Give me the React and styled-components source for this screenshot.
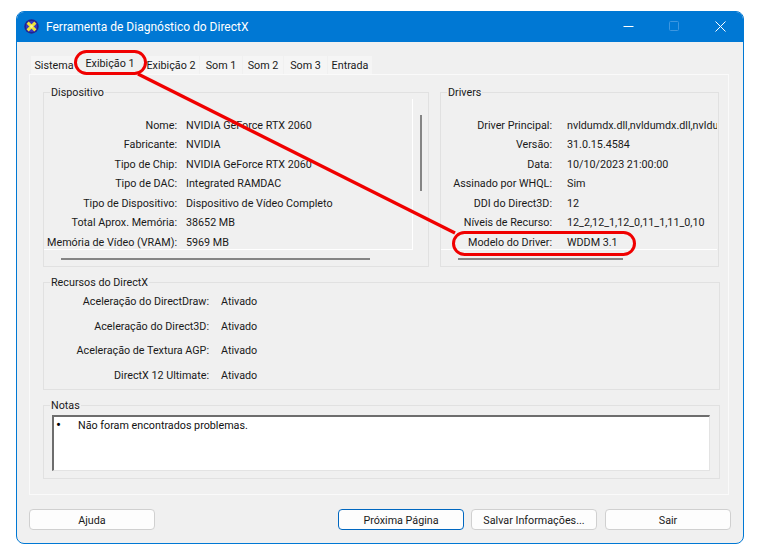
import React from 'react';
import styled, { createGlobalStyle } from 'styled-components';

const GlobalStyle = createGlobalStyle`
  html, body {
    margin: 0;
    background: #fff;
  }
  body {
    width: 757px;
    height: 557px;
    overflow: hidden;
    font-family: Roboto, "Open Sans", sans-serif;
    font-size: 10.75px;
    color: #1a1a1a;
  }
`;

const Page = styled.div`
  position: relative;
  width: 757px;
  height: 557px;
  padding: 11px 13px 13px 16px;
  box-sizing: border-box;
`;

const Window = styled.div`
  width: 728px;
  height: 533px;
  box-sizing: border-box;
  border: 1px solid #0078d4;
  border-radius: 8px;
  background: #f0f0f0;
  overflow: hidden;
  display: flex;
  flex-direction: column;
`;

const TitleBar = styled.div`
  height: 31px;
  flex: none;
  margin: -1px -1px 0;
  background: #0078d4;
  color: #fff;
  display: flex;
  align-items: center;
  padding: 0 0 0 8px;
  font-size: 12px;
`;

const TitleText = styled.span`
  margin-left: 7px;
  flex: 1;
`;

const Controls = styled.div`
  display: flex;
  align-items: center;
  gap: 35px;
  padding-right: 18px;
`;

const Body = styled.div`
  flex: 1;
  display: flex;
  flex-direction: column;
  padding: 14px 13px 0 12px;
`;

const Tabs = styled.div`
  display: flex;
  height: 18px;
  align-items: flex-end;
  padding-left: 2px;
`;

const Tab = styled.div`
  height: ${p => (p.$active ? 20 : 18)}px;
  width: ${p => p.$w}px;
  flex: none;
  box-sizing: border-box;
  padding-bottom: ${p => (p.$active ? 2 : 0)}px;
  display: flex;
  align-items: center;
  justify-content: center;
  background: ${p => (p.$active ? '#f0f0f0' : '#f5f5f5')};
  margin-right: 1px;
`;

const TabPanel = styled.div`
  width: 700px;
  height: 421px;
  flex: none;
  box-sizing: border-box;
  border: 1px solid #fafafa;
  padding: 10px 9px 0 13px;
  display: flex;
  flex-direction: column;
`;

const TopRow = styled.div`
  display: flex;
  gap: 11px;
`;

const Group = styled.fieldset`
  margin: 0;
  min-width: 0;
  flex: none;
  box-sizing: border-box;
  width: ${p => p.$w}px;
  height: ${p => p.$h}px;
  border: 1.5px solid #e1e1e1;
  padding: 0;
  position: relative;
`;

const Legend = styled.legend`
  margin-left: 6px;
  padding: 1px 1px 0;
  line-height: 13px;
`;

const Viewport = styled.div`
  height: 151px;
  width: ${p => p.$w}px;
  box-sizing: border-box;
  border-bottom: 1px solid #fff;
  border-right: ${p => (p.$vertical ? '1px solid #fff' : 'none')};
  overflow: hidden;
  padding-top: 16.5px;
`;

const Row = styled.div`
  display: flex;
  height: 19.5px;
  align-items: center;
  white-space: nowrap;
`;

const Label = styled.div`
  width: ${p => p.$w}px;
  flex: none;
  text-align: right;
  margin-right: ${p => p.$gap}px;
`;

const Value = styled.div`
  flex: none;
`;

const HThumb = styled.div`
  height: 2px;
  margin: 8px 0 0 ${p => p.$left}px;
  width: ${p => p.$w}px;
  background: #858585;
`;

const VThumb = styled.div`
  position: absolute;
  left: 376px;
  top: 16px;
  width: 2px;
  height: 76px;
  background: #858585;
`;

const Recursos = styled(Group)`
  margin-top: 8px;
`;

const FeatureRows = styled.div`
  padding-top: 0.5px;
`;

const FeatureRow = styled(Row)`
  height: 24.5px;
`;

const Notas = styled(Group)`
  margin-top: 8px;
`;

const NotesBox = styled.div`
  width: 658px;
  height: 56px;
  margin: 3px 0 0 8px;
  box-sizing: border-box;
  background: #fff;
  border: 1px solid #e3e3e3;
  border-top: 2px solid #6d6d6d;
  border-left: 2px solid #6d6d6d;
  padding: 2px 0 0 2px;
  display: flex;
  color: #111;
`;

const Bullet = styled.span`
  width: 22px;
  font-size: 15px;
  line-height: 12px;
  color: #000;
`;

const Footer = styled.div`
  display: flex;
  padding-top: 14px;
`;

const Btn = styled.div`
  width: 126px;
  height: 21px;
  flex: none;
  box-sizing: border-box;
  border: 1px solid ${p => (p.$primary ? '#0067c0' : '#d0d0d0')};
  border-radius: 4px;
  background: #fdfdfd;
  padding-top: 1px;
  display: flex;
  align-items: center;
  justify-content: center;
  margin-left: ${p => p.$ml || 0}px;
`;

const Callout = styled.div`
  position: absolute;
  left: ${p => p.$x}px;
  top: ${p => p.$y}px;
  width: ${p => p.$w}px;
  height: ${p => p.$h}px;
  box-sizing: border-box;
  border: 3px solid #f00000;
  border-radius: 13px;
`;

const Arrow = styled.svg`
  position: absolute;
  left: 0;
  top: 0;
  pointer-events: none;
`;

const DxIcon = () => (
  <svg width="15" height="15" viewBox="0 0 15 15">
    <circle cx="7.5" cy="7.5" r="7.2" fill="#23238f" />
    <circle cx="7.5" cy="7.5" r="5.6" fill="#3a3ac0" />
    <path d="M3.6 3.6l7.8 7.8M11.4 3.6l-7.8 7.8" stroke="#efe13a" strokeWidth="3" />
    <circle cx="7.5" cy="7.5" r="1.4" fill="#f9f39a" />
  </svg>
);

const device = [
  ['Nome:', 'NVIDIA GeForce RTX 2060'],
  ['Fabricante:', 'NVIDIA'],
  ['Tipo de Chip:', 'NVIDIA GeForce RTX 2060'],
  ['Tipo de DAC:', 'Integrated RAMDAC'],
  ['Tipo de Dispositivo:', 'Dispositivo de Vídeo Completo'],
  ['Total Aprox. Memória:', '38652 MB'],
  ['Memória de Vídeo (VRAM):', '5969 MB'],
];

const drivers = [
  ['Driver Principal:', 'nvldumdx.dll,nvldumdx.dll,nvldu'],
  ['Versão:', '31.0.15.4584'],
  ['Data:', '10/10/2023 21:00:00'],
  ['Assinado por WHQL:', 'Sim'],
  ['DDI do Direct3D:', '12'],
  ['Níveis de Recurso:', '12_2,12_1,12_0,11_1,11_0,10'],
  ['Modelo do Driver:', 'WDDM 3.1'],
];

const features = [
  ['Aceleração do DirectDraw:', 'Ativado'],
  ['Aceleração do Direct3D:', 'Ativado'],
  ['Aceleração de Textura AGP:', 'Ativado'],
  ['DirectX 12 Ultimate:', 'Ativado'],
];

const tabs = [
  ['Sistema', 46],
  ['Exibição 1', 64],
  ['Exibição 2', 56],
  ['Som 1', 42],
  ['Som 2', 40],
  ['Som 3', 43],
  ['Entrada', 44],
];

export default function App() {
  return (
    <Page>
      <GlobalStyle />
      <Window>
        <TitleBar>
          <DxIcon />
          <TitleText>Ferramenta de Diagnóstico do DirectX</TitleText>
          <Controls>
            <svg width="11" height="11" viewBox="0 0 11 11">
              <path d="M0.5 5.5h10" stroke="#fff" />
            </svg>
            <svg width="11" height="11" viewBox="0 0 11 11">
              <rect x="0.5" y="0.5" width="9" height="9" rx="1" fill="none" stroke="#3d97e0" />
            </svg>
            <svg width="11" height="11" viewBox="0 0 11 11">
              <path d="M0.5 0.5l10 10M10.5 0.5l-10 10" stroke="#fff" />
            </svg>
          </Controls>
        </TitleBar>
        <Body>
          <Tabs>
            {tabs.map(([name, w], i) => (
              <Tab key={name} $w={w} $active={i === 1}>{name}</Tab>
            ))}
          </Tabs>
          <TabPanel>
            <TopRow>
              <Group $w={386} $h={182}>
                <Legend>Dispositivo</Legend>
                <Viewport $vertical $w={369}>
                  {device.map(([k, v]) => (
                    <Row key={k}>
                      <Label $w={133} $gap={9}>{k}</Label>
                      <Value>{v}</Value>
                    </Row>
                  ))}
                </Viewport>
                <HThumb $left={17} $w={309} />
                <VThumb />
              </Group>
              <Group $w={279} $h={182}>
                <Legend>Drivers</Legend>
                <Viewport $w={276}>
                  {drivers.map(([k, v]) => (
                    <Row key={k}>
                      <Label $w={111} $gap={15}>{k}</Label>
                      <Value>{v}</Value>
                    </Row>
                  ))}
                </Viewport>
                <HThumb $left={17} $w={165} />
              </Group>
            </TopRow>
            <Recursos $w={677} $h={115}>
              <Legend>Recursos do DirectX</Legend>
              <FeatureRows>
                {features.map(([k, v]) => (
                  <FeatureRow key={k}>
                    <Label $w={165} $gap={12}>{k}</Label>
                    <Value>{v}</Value>
                  </FeatureRow>
                ))}
              </FeatureRows>
            </Recursos>
            <Notas $w={677} $h={81}>
              <Legend>Notas</Legend>
              <NotesBox>
                <Bullet>•</Bullet>
                Não foram encontrados problemas.
              </NotesBox>
            </Notas>
          </TabPanel>
          <Footer>
            <Btn>Ajuda</Btn>
            <Btn $primary $ml={183}>Próxima Página</Btn>
            <Btn $ml={7}>Salvar Informações...</Btn>
            <Btn $ml={8}>Sair</Btn>
          </Footer>
        </Body>
      </Window>
      <Arrow width="757" height="557" viewBox="0 0 757 557">
        <path d="M138 74L455 233" stroke="#f00000" strokeWidth="3.4" fill="none" />
      </Arrow>
      <Callout $x={74} $y={50} $w={73} $h={25} />
      <Callout $x={452} $y={231} $w={184} $h={25} />
    </Page>
  );
}
